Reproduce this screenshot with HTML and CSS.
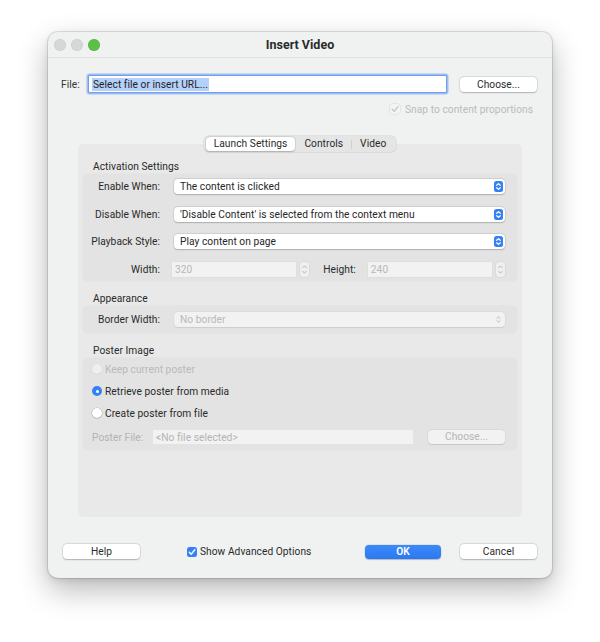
FILE: index.html
```html
<!DOCTYPE html>
<html>
<head>
<meta charset="utf-8">
<link rel="stylesheet" href="styles.css">
</head>
<body>
<div class="window">
  <div class="titlebar">
    <div class="lights"><span class="light"></span><span class="light"></span><span class="light green"></span></div>
    <div class="title">Insert Video</div>
    <div class="lights-spacer"></div>
  </div>
  <div class="content">
    <div class="file-row">
      <span class="file-label">File:</span>
      <div class="url-input"><span class="selection">Select file or insert URL...</span></div>
      <button class="btn choose">Choose...</button>
    </div>
    <div class="snap-row">
      <span class="cb cb-disabled"><svg width="10" height="10" viewBox="0 0 10 10"><path d="M2.2 5.2 L4.2 7.4 L7.9 2.6" fill="none" stroke="#c4c6c5" stroke-width="1.3" stroke-linecap="round" stroke-linejoin="round"/></svg></span>
      <span class="snap-text">Snap to content proportions</span>
    </div>
    <div class="tabs">
      <span class="tab active">Launch Settings</span>
      <span class="tab">Controls</span>
      <span class="tab-sep"></span>
      <span class="tab">Video</span>
    </div>
    <div class="panel">
      <div class="section-title">Activation Settings</div>
      <div class="group g-activation">
        <div class="row">
          <span class="lbl">Enable When:</span>
          <div class="select"><span>The content is clicked</span><svg class="arrows" width="9" height="11" viewBox="0 0 9 11"><rect width="9" height="11" rx="2.5" fill="#3481f6"/><path d="M2.7 4.3 L4.5 2.6 L6.3 4.3 M2.7 6.7 L4.5 8.4 L6.3 6.7" fill="none" stroke="#fff" stroke-width="1.2" stroke-linecap="round" stroke-linejoin="round"/></svg></div>
        </div>
        <div class="row">
          <span class="lbl">Disable When:</span>
          <div class="select"><span>'Disable Content' is selected from the context menu</span><svg class="arrows" width="9" height="11" viewBox="0 0 9 11"><rect width="9" height="11" rx="2.5" fill="#3481f6"/><path d="M2.7 4.3 L4.5 2.6 L6.3 4.3 M2.7 6.7 L4.5 8.4 L6.3 6.7" fill="none" stroke="#fff" stroke-width="1.2" stroke-linecap="round" stroke-linejoin="round"/></svg></div>
        </div>
        <div class="row">
          <span class="lbl">Playback Style:</span>
          <div class="select"><span>Play content on page</span><svg class="arrows" width="9" height="11" viewBox="0 0 9 11"><rect width="9" height="11" rx="2.5" fill="#3481f6"/><path d="M2.7 4.3 L4.5 2.6 L6.3 4.3 M2.7 6.7 L4.5 8.4 L6.3 6.7" fill="none" stroke="#fff" stroke-width="1.2" stroke-linecap="round" stroke-linejoin="round"/></svg></div>
        </div>
        <div class="row">
          <span class="lbl">Width:</span>
          <div class="num-input">320</div>
          <span class="stepper"><svg width="9" height="15" viewBox="0 0 9 15"><path d="M2.8 5.6 L4.5 3.9 L6.2 5.6 M2.8 9.4 L4.5 11.1 L6.2 9.4" fill="none" stroke="#b4b6b5" stroke-width="1" stroke-linecap="round" stroke-linejoin="round"/></svg></span>
          <span class="lbl2">Height:</span>
          <div class="num-input">240</div>
          <span class="stepper"><svg width="9" height="15" viewBox="0 0 9 15"><path d="M2.8 5.6 L4.5 3.9 L6.2 5.6 M2.8 9.4 L4.5 11.1 L6.2 9.4" fill="none" stroke="#b4b6b5" stroke-width="1" stroke-linecap="round" stroke-linejoin="round"/></svg></span>
        </div>
      </div>

      <div class="section-title">Appearance</div>
      <div class="group g-appearance">
        <div class="row">
          <span class="lbl">Border Width:</span>
          <div class="select select-disabled"><span>No border</span><svg class="arrows" width="9" height="11" viewBox="0 0 9 11"><path d="M2.9 4.3 L4.5 2.8 L6.1 4.3 M2.9 6.7 L4.5 8.2 L6.1 6.7" fill="none" stroke="#b8b9b8" stroke-width="1" stroke-linecap="round" stroke-linejoin="round"/></svg></div>
        </div>
      </div>

      <div class="section-title">Poster Image</div>
      <div class="group g-poster">
        <div class="radio-row disabled"><span class="radio radio-disabled"></span><span>Keep current poster</span></div>
        <div class="radio-row"><span class="radio radio-on"></span><span>Retrieve poster from media</span></div>
        <div class="radio-row"><span class="radio"></span><span>Create poster from file</span></div>
        <div class="poster-file-row">
          <span class="pf-label">Poster File:</span>
          <div class="pf-input">&lt;No file selected&gt;</div>
          <button class="btn btn-disabled pf-choose">Choose...</button>
        </div>
      </div>
    </div>

    <div class="footer">
      <button class="btn help">Help</button>
      <span class="adv">
        <span class="cb cb-on"><svg width="10" height="10" viewBox="0 0 10 10"><path d="M2.3 5.2 L4.2 7.3 L7.8 2.7" fill="none" stroke="#fff" stroke-width="1.4" stroke-linecap="round" stroke-linejoin="round"/></svg></span>
        <span>Show Advanced Options</span>
      </span>
      <button class="btn ok">OK</button>
      <button class="btn cancel">Cancel</button>
    </div>
  </div>
</div>
</body>
</html>
```

FILE: styles.css
```css
* { box-sizing: border-box; }
html, body { margin: 0; padding: 0; }
body {
  background: #ffffff;
  width: 600px;
  height: 642px;
  font-family: "Roboto", "Liberation Sans", sans-serif;
  font-size: 10.2px;
  letter-spacing: 0.05px;
  color: #262626;
  overflow: hidden;
  white-space: nowrap;
}
.window {
  margin: 32px 0 0 48px;
  width: 504px;
  height: 546px;
  background: #f0f2f1;
  border-radius: 10px;
  box-shadow: 0 0 0 1px rgba(0,0,0,0.10), 0 12px 30px rgba(0,0,0,0.28), 0 2px 6px rgba(0,0,0,0.10);
  display: flex;
  flex-direction: column;
}
.titlebar {
  height: 26px;
  border-bottom: 1px solid #dfe1e0;
  display: flex;
  align-items: center;
  flex: none;
}
.lights {
  width: 58px;
  padding-left: 6px;
  display: flex;
  gap: 5px;
}
.lights-spacer { width: 58px; }
.light {
  width: 12px;
  height: 12px;
  border-radius: 50%;
  background: #d6d8d7;
  box-shadow: inset 0 0 0 0.5px rgba(0,0,0,0.08);
}
.light.green { background: #5bc144; box-shadow: inset 0 0 0 0.5px rgba(0,0,0,0.12); }
.title {
  flex: 1;
  text-align: center;
  font-weight: 700;
  font-size: 12.5px;
  letter-spacing: 0;
  color: #2a2a2a;
}
.content {
  padding: 0 15px;
  display: flex;
  flex-direction: column;
  flex: 1;
}
.file-row {
  margin: 18px 0 0 -2px;
  height: 16px;
  display: flex;
  align-items: center;
}
.file-label { width: 28px; color: #333; }
.url-input {
  width: 357px;
  height: 16px;
  background: #fff;
  border-radius: 1px;
  box-shadow: 0 0 0 1px #6f9ff0, 0 0 0 2.5px rgba(118,160,240,0.65);
  display: flex;
  align-items: center;
  padding-left: 3px;
}
.selection {
  background: #b5d1fa;
  color: #1f1f1f;
  line-height: 13px;
  padding: 0 1px;
}
.btn {
  font-family: inherit;
  font-size: 10.2px;
  letter-spacing: 0.05px;
  color: #2a2a2a;
  background: #ffffff;
  border: none;
  border-radius: 4px;
  height: 15px;
  width: 77px;
  padding: 0;
  line-height: 15px;
  box-shadow: 0 0 0 0.5px rgba(0,0,0,0.12), 0 0.5px 1.5px rgba(0,0,0,0.22);
}
.choose { margin-left: auto; }
.snap-row {
  margin-top: 11px;
  height: 12px;
  display: flex;
  justify-content: flex-end;
  align-items: center;
  padding-right: 4px;
  gap: 5px;
  color: #b9bbba;
}
.cb {
  width: 10px;
  height: 10px;
  border-radius: 2.5px;
  display: inline-flex;
}
.cb-disabled { background: #f2f3f2; box-shadow: 0 0 0 0.5px rgba(0,0,0,0.1); }
.cb-on { background: #3481f6; }
.tabs {
  margin: 21px auto -8px;
  height: 16px;
  position: relative;
  z-index: 1;
  display: flex;
  align-items: center;
  background: #e4e5e4;
  border-radius: 5px;
  box-shadow: 0 0 0 0.5px rgba(0,0,0,0.12);
  padding: 0 2px;
}
.tab {
  height: 14px;
  line-height: 14px;
  padding: 0 8px;
  color: #2a2a2a;
  border-radius: 4px;
}
.tab.active {
  background: #ffffff;
  box-shadow: 0 0 0 0.5px rgba(0,0,0,0.1), 0 0.5px 1.5px rgba(0,0,0,0.2);
  margin-right: 1px;
}
.tab-sep { width: 1px; height: 9px; background: #cfd0cf; }
.panel {
  margin: 0 15px;
  height: 373px;
  background: #e8e9e8;
  border-radius: 5px;
  padding: 16px 5px 0;
  flex: none;
}
.section-title {
  height: 14px;
  line-height: 14px;
  padding-left: 10px;
  margin-top: 11px;
  color: #2a2a2a;
}
.section-title:first-child { margin-top: 0; }
.group {
  background: #e2e3e2;
  border-radius: 5px;
  box-shadow: 0 0 0 0.5px rgba(0,0,0,0.03);
}
.g-activation {
  padding: 5px 12px 4px 0;
  display: flex;
  flex-direction: column;
  gap: 12.5px;
}
.g-appearance { padding: 6px 12px 6px 0; }
.row {
  height: 15px;
  display: flex;
  align-items: center;
}
.lbl {
  width: 77px;
  flex: none;
  text-align: right;
  margin-right: 14px;
  color: #2a2a2a;
}
.select {
  flex: 1;
  height: 15px;
  background: #ffffff;
  border-radius: 4px;
  box-shadow: 0 0 0 0.5px rgba(0,0,0,0.10), 0 0.5px 1.5px rgba(0,0,0,0.2);
  display: flex;
  align-items: center;
  justify-content: space-between;
  padding: 0 2px 0 6px;
}
.select-disabled {
  background: #f1f2f1;
  color: #b8b9b8;
  box-shadow: 0 0 0 0.5px rgba(0,0,0,0.05), 0 0.5px 1px rgba(0,0,0,0.08);
}
.row .lbl + .num-input { margin-left: -2px; }
.num-input {
  flex: 1;
  height: 15px;
  background: #f1f2f1;
  color: #b8b9b8;
  display: flex;
  align-items: center;
  padding-left: 3px;
  box-shadow: 0 0 0 0.5px rgba(0,0,0,0.04);
}
.stepper {
  width: 9px;
  height: 15px;
  margin-left: 4px;
  border-radius: 3px;
  background: #eeefee;
  box-shadow: 0 0 0 0.5px rgba(0,0,0,0.08);
  display: inline-flex;
}
.lbl2 { margin: 0 12px 0 14px; color: #2a2a2a; }
.g-poster {
  padding: 5px 12px 5.5px 9px;
  display: flex;
  flex-direction: column;
}
.radio-row {
  height: 13px;
  display: flex;
  align-items: center;
  gap: 3px;
  margin-bottom: 9px;
  color: #2a2a2a;
}
.radio-row.disabled { color: #b9bab9; }
.radio {
  width: 10px;
  height: 10px;
  border-radius: 50%;
  background: #ffffff;
  box-shadow: 0 0 0 0.5px rgba(0,0,0,0.18), 0 0.5px 1px rgba(0,0,0,0.15);
  display: inline-block;
}
.radio-disabled { background: #eeefee; box-shadow: 0 0 0 0.5px rgba(0,0,0,0.06); }
.radio-on {
  background: #3481f6;
  box-shadow: none;
  position: relative;
}
.radio-on::after {
  content: "";
  position: absolute;
  left: 3.5px; top: 3.5px;
  width: 3px; height: 3px;
  border-radius: 50%;
  background: #fff;
}
.poster-file-row {
  margin-top: 1px;
  height: 15px;
  display: flex;
  align-items: center;
}
.pf-label { width: 61px; color: #b3b4b3; }
.pf-input {
  width: 260px;
  height: 14px;
  background: #f1f2f1;
  color: #b3b4b3;
  padding-left: 3px;
  display: flex;
  align-items: center;
}
.btn-disabled {
  background: #f1f2f1;
  color: #b5b6b5;
  box-shadow: 0 0 0 0.5px rgba(0,0,0,0.06), 0 0.5px 1px rgba(0,0,0,0.1);
  height: 14px;
  line-height: 14px;
}
.pf-choose { margin-left: auto; }
.footer {
  margin-top: 27px;
  height: 15px;
  display: flex;
  align-items: center;
}
.adv {
  margin-left: 47px;
  display: flex;
  align-items: center;
  gap: 3px;
  color: #2a2a2a;
}
.ok {
  margin-left: auto;
  width: 76px;
  height: 14px;
  line-height: 14px;
  background: linear-gradient(#3c8af7, #2c78f3);
  color: #ffffff;
  font-weight: 600;
  box-shadow: 0 0 0 0.5px rgba(0,0,0,0.08), 0 0.5px 1px rgba(0,0,0,0.2);
}
.cancel { margin-left: 19px; }
```
